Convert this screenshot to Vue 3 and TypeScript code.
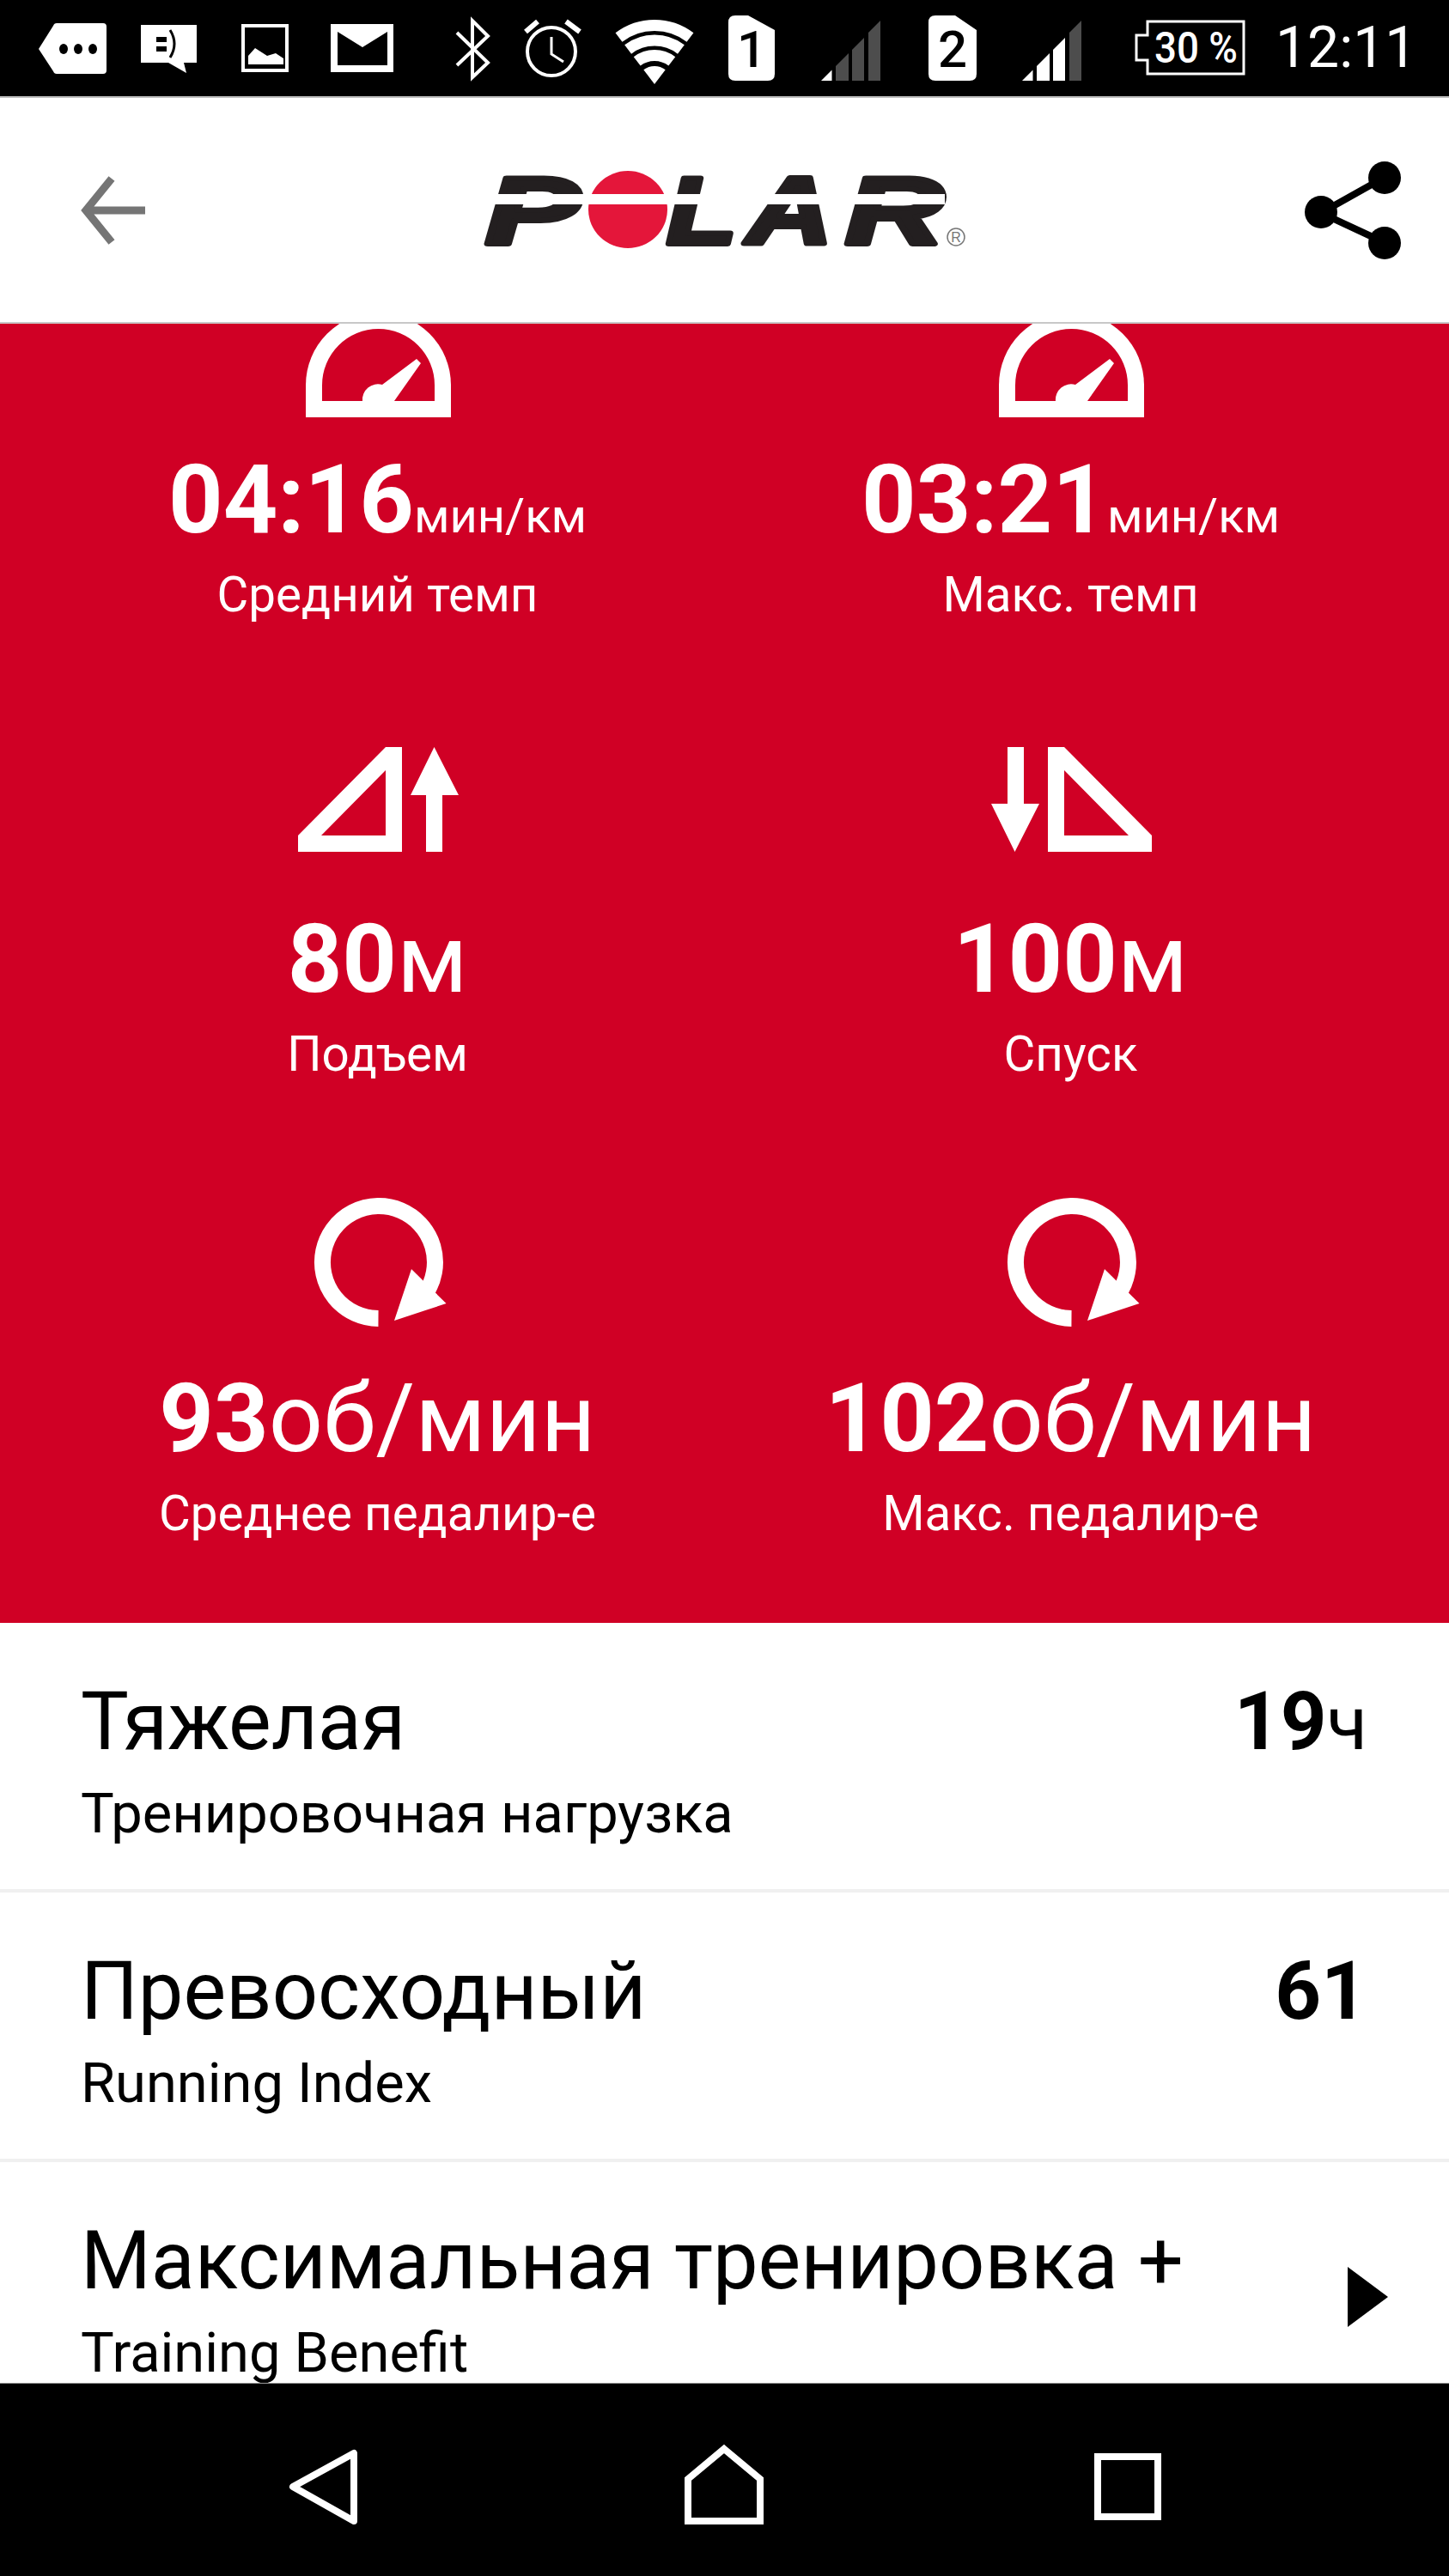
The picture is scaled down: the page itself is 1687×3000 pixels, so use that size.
<script setup lang="ts">
interface Stat { icon: string; value: string; unit: string; label: string; big: boolean }
interface Row { title: string; sub: string; value: string; unit: string; more: boolean }

const stats: Stat[] = [
  { icon: 'gauge', value: '04:16', unit: 'мин/км', label: 'Средний темп', big: false },
  { icon: 'gauge', value: '03:21', unit: 'мин/км', label: 'Макс. темп', big: false },
  { icon: 'up', value: '80', unit: 'м', label: 'Подъем', big: true },
  { icon: 'down', value: '100', unit: 'м', label: 'Спуск', big: true },
  { icon: 'cadence', value: '93', unit: 'об/мин', label: 'Среднее педалир-е', big: true },
  { icon: 'cadence', value: '102', unit: 'об/мин', label: 'Макс. педалир-е', big: true }
]

const rows: Row[] = [
  { title: 'Тяжелая', sub: 'Тренировочная нагрузка', value: '19', unit: 'ч', more: false },
  { title: 'Превосходный', sub: 'Running Index', value: '61', unit: '', more: false },
  { title: 'Максимальная тренировка +', sub: 'Training Benefit', value: '', unit: '', more: true }
]
</script>

<template>
  <div class="phone">
    <div class="status">
      <svg width="124" height="112" viewBox="0 0 124 112"><path d="M66 27H120q4 0 4 4V82q0 4-4 4H66q-3 0-4-3L45 57 62 30q1-3 4-3Z" fill="#fff"/><ellipse cx="74" cy="57" rx="5" ry="6"/><ellipse cx="91" cy="57" rx="5" ry="6"/><ellipse cx="108" cy="57" rx="5" ry="6"/></svg>
      <svg width="112" height="112" viewBox="124 0 112 112"><path d="M164 29H229V73H214L217 85 196 73H164Z" fill="#fff"/><rect x="182" y="43" width="12" height="6"/><rect x="182" y="54" width="12" height="6"/><path d="M198 35Q208 51 198 67" fill="none" stroke="#000" stroke-width="3"/></svg>
      <svg width="110" height="112" viewBox="236 0 110 112"><rect x="283" y="30" width="51" height="52" fill="none" stroke="#fff" stroke-width="4"/><path d="M289 65 297 56 311 65 321 62 330 68V75H289Z" fill="#fff"/></svg>
      <svg width="124" height="112" viewBox="346 0 124 112"><rect x="385" y="28" width="73" height="56" fill="#fff"/><path d="M393 37 422 55 451 37V76H393Z"/></svg>
      <svg width="110" height="112" viewBox="470 0 110 112"><path d="M532 38 568 73 550 90V24L568 42 532 76" fill="none" stroke="#fff" stroke-width="4"/></svg>
      <svg width="105" height="112" viewBox="580 0 105 112"><circle cx="642" cy="60" r="28" fill="none" stroke="#fff" stroke-width="4"/><path d="M642 43V63L656 72" fill="none" stroke="#fff" stroke-width="3"/><path d="M612 37 626 25M659 25 675 37" stroke="#fff" stroke-width="6"/></svg>
      <svg width="135" height="112" viewBox="685 0 135 112"><g fill="none" stroke="#fff" stroke-width="13"><path d="M720.5 43.5A68.5 68.5 0 0 1 803.5 43.5"/><path d="M731.1 57.5A51 51 0 0 1 792.9 57.5"/><path d="M741.7 71.4A33.5 33.5 0 0 1 782.3 71.4"/></g><path d="M762 98 749.3 81.3A21 21 0 0 1 774.7 81.3Z" fill="#fff"/></svg>
      <svg width="95" height="112" viewBox="820 0 95 112"><path d="M856 18H871L902 35V86q0 8-8 8H856q-8 0-8-8V26q0-8 8-8Z" fill="#fff"/><text x="875" y="78" class="sim">1</text></svg>
      <svg width="120" height="112" viewBox="915 0 120 112"><path d="M956 94 968.5 81.5V94Z" fill="#fff"/><g fill="#4d4d4d"><path d="M973 94V77L988 62V94Z"/><path d="M992 94V58L1006 44V94Z"/><path d="M1011 94V38L1025 24V94Z"/></g></svg>
      <svg width="115" height="112" viewBox="1035 0 115 112"><path d="M1089 18H1112L1137 35V86q0 8-8 8H1089q-8 0-8-8V26q0-8 8-8Z" fill="#fff"/><text x="1109" y="78" class="sim">2</text></svg>
      <svg width="120" height="112" viewBox="1150 0 120 112"><path d="M1190 94 1202.5 81.5V94Z" fill="#fff"/><g fill="#fff"><path d="M1207 94V77L1222 62V94Z"/><path d="M1226 94V58L1240 44V94Z"/></g><path d="M1245 94V38L1259 24V94Z" fill="#4d4d4d"/></svg>
      <svg width="195" height="112" viewBox="1270 0 195 112"><path d="M1336 25H1448V86H1336V70H1323V41H1336Z" fill="none" stroke="#fff" stroke-width="3"/><text x="1344" y="73" class="batt" textLength="97" lengthAdjust="spacingAndGlyphs">30 %</text></svg>
      <span class="time">12:11</span>
    </div>

    <header class="top">
      <svg class="back" width="76" height="80" viewBox="93 204 76 80"><path d="M169 244H100M130 207 100 244 130 281" fill="none" stroke="#757575" stroke-width="9"/></svg>
      <svg class="logo" width="590" height="150" viewBox="540 169 590 150">
        <g class="logo-letters">
          <text transform="translate(565 283) scale(1.47 1)">P</text>
          <text transform="translate(776 283) scale(1.2 1)">L</text>
          <text transform="translate(869 283) scale(1.24 1)">A</text>
          <text transform="translate(984 283) scale(1.42 1)">R</text>
        </g>
        <ellipse cx="731" cy="243" rx="46" ry="45" fill="#e4163a"/>
        <rect x="550" y="225" width="550" height="12" fill="#fff"/>
        <circle cx="1113" cy="275" r="10" fill="none" stroke="#777" stroke-width="1.5"/>
        <text x="1113" y="281" class="reg">R</text>
      </svg>
      <svg class="share" width="112" height="114" viewBox="1519 186 112 114"><path d="M1611 205 1538 246 1611 280" fill="none" stroke="#000" stroke-width="8"/><circle cx="1612" cy="205" r="19"/><circle cx="1538" cy="245" r="19"/><circle cx="1612" cy="281" r="19"/></svg>
    </header>

    <section class="red">
      <div class="grid">
        <div v-for="s in stats" :key="s.label" class="cell">
          <svg v-if="s.icon === 'gauge'" width="200" height="170" viewBox="340 320 200 170">
            <path d="M356 486V448.5A84.5 84.5 0 0 1 525 448.5V486Z" fill="#fff"/>
            <path d="M375 467V448.5A65.5 65.5 0 0 1 506 448.5V467H459L490 423 485 418 445 448A18 18 0 0 0 422 467Z" fill="#d00025"/>
          </svg>
          <svg v-else-if="s.icon === 'up'" width="200" height="170" viewBox="340 855 200 170">
            <path d="M347 992V973L449 870H468V992ZM374 973H449V897Z" fill="#fff" fill-rule="evenodd"/>
            <path d="M505.500 870 534 926H515V992H496V926H478Z" fill="#fff"/>
          </svg>
          <svg v-else-if="s.icon === 'down'" width="200" height="170" viewBox="1146 855 200 170">
            <path d="M1340 992V973L1238 870H1219V992ZM1313 973H1238V897Z" fill="#fff" fill-rule="evenodd"/>
            <path d="M1180.500 992 1209 936H1191V870H1172V936H1153Z" fill="#fff"/>
          </svg>
          <svg v-else width="200" height="170" viewBox="340 1390 200 170">
            <path d="M440.500 1535.500A65.500 65.500 0 1 1 495 1507" fill="none" stroke="#fff" stroke-width="19"/>
            <path d="M459 1538 479 1478 519.500 1518Z" fill="#fff"/>
          </svg>
          <div class="value">{{ s.value }}<span :class="s.big ? 'unit-big' : 'unit-small'">{{ s.unit }}</span></div>
          <div class="label">{{ s.label }}</div>
        </div>
      </div>
    </section>

    <section class="list">
      <div v-for="r in rows" :key="r.title" class="row">
        <div class="texts">
          <div class="title">{{ r.title }}</div>
          <div class="sub">{{ r.sub }}</div>
        </div>
        <div v-if="r.value" class="row-value">{{ r.value }}<span class="row-unit">{{ r.unit }}</span></div>
        <svg v-if="r.more" class="chev" width="47" height="70" viewBox="0 0 47 70"><path d="M0 0 47 35 0 70Z"/></svg>
      </div>
    </section>

    <nav class="nav">
      <svg width="90" height="100" viewBox="330 2845 90 100"><path d="M412 2856V2935L341 2895Z" fill="none" stroke="#fff" stroke-width="8" stroke-linejoin="round"/></svg>
      <svg width="100" height="100" viewBox="793 2845 100 100"><path d="M843 2851 885 2886V2935H801V2886Z" fill="none" stroke="#fff" stroke-width="8"/></svg>
      <svg class="nav-last" width="84" height="84" viewBox="1271 2853 84 84"><rect x="1278" y="2860" width="70" height="70" fill="none" stroke="#fff" stroke-width="8"/></svg>
    </nav>
  </div>
</template>

<style scoped>
.phone {
  width: 1687px;
  height: 3000px;
  display: flex;
  flex-direction: column;
  overflow: hidden;
  background: #fff;
  font-family: Roboto, "Liberation Sans", sans-serif;
}
.status {
  height: 112px;
  flex: none;
  background: #000;
  display: flex;
  align-items: center;
}
.status svg { flex: none; }
.sim { font: 500 60px Roboto, sans-serif; fill: #000; text-anchor: middle; }
.batt { font: 500 50px Roboto, sans-serif; fill: #fff; }
.time {
  color: #fff;
  font-size: 66px;
  line-height: 112px;
  margin-left: 20px;
}
.top {
  height: 265px;
  flex: none;
  box-sizing: border-box;
  border-top: 2px solid #bdbdbd;
  border-bottom: 2px solid #c8c8c8;
  display: flex;
  align-items: center;
}
.back { margin-left: 93px; flex: none; }
.logo { margin-left: 371px; flex: none; }
.share { margin-left: 389px; flex: none; }
.logo-letters text {
  font: italic 700 112px "Liberation Sans", sans-serif;
  fill: #231f20;
  stroke: #231f20;
  stroke-width: 6px;
  stroke-linejoin: round;
}
.reg { font: 400 16px "Liberation Sans", sans-serif; fill: #777; text-anchor: middle; }
.red {
  height: 1513px;
  flex: none;
  background: #d00025;
  overflow: hidden;
  color: #fff;
}
.grid {
  display: grid;
  grid-template-columns: 807px 807px;
  grid-auto-rows: 535px;
  margin: -57px 0 0 36px;
}
.cell {
  display: flex;
  flex-direction: column;
  align-items: center;
}
.cell svg { flex: none; }
.value {
  font-size: 111px;
  font-weight: 700;
  line-height: 120px;
  margin-top: 32px;
  white-space: nowrap;
}
.unit-small { font-size: 56px; font-weight: 400; line-height: 0; }
.unit-big { font-size: 111px; font-weight: 400; line-height: 0; }
.label {
  font-size: 56.5px;
  line-height: 70px;
  margin-top: 16px;
  white-space: nowrap;
}
.list {
  height: 885px;
  flex: none;
  overflow: hidden;
  color: #000;
}
.row {
  height: 314px;
  box-sizing: border-box;
  border-bottom: 4px solid #f0f0f0;
  padding: 0 95px 0 94px;
  display: flex;
  justify-content: space-between;
}
.row:last-child { border-bottom: 0; }
.title {
  font-size: 93.7px;
  line-height: 110px;
  margin-top: 60px;
  white-space: nowrap;
}
.sub {
  font-size: 65px;
  line-height: 76px;
  margin-top: 14px;
  white-space: nowrap;
}
.row-value {
  font-size: 94px;
  font-weight: 700;
  line-height: 110px;
  margin-top: 60px;
}
.row-unit { font-size: 87px; font-weight: 400; line-height: 0; }
.chev { align-self: center; flex: none; margin: 0 -24px 0 0; }
.nav {
  flex: 1;
  background: #000;
  border-top: 1px solid #999;
  display: flex;
  align-items: center;
  padding: 16px 0 0 330px;
  gap: 373px;
}
.nav-last { margin-left: 5px; }
</style>
